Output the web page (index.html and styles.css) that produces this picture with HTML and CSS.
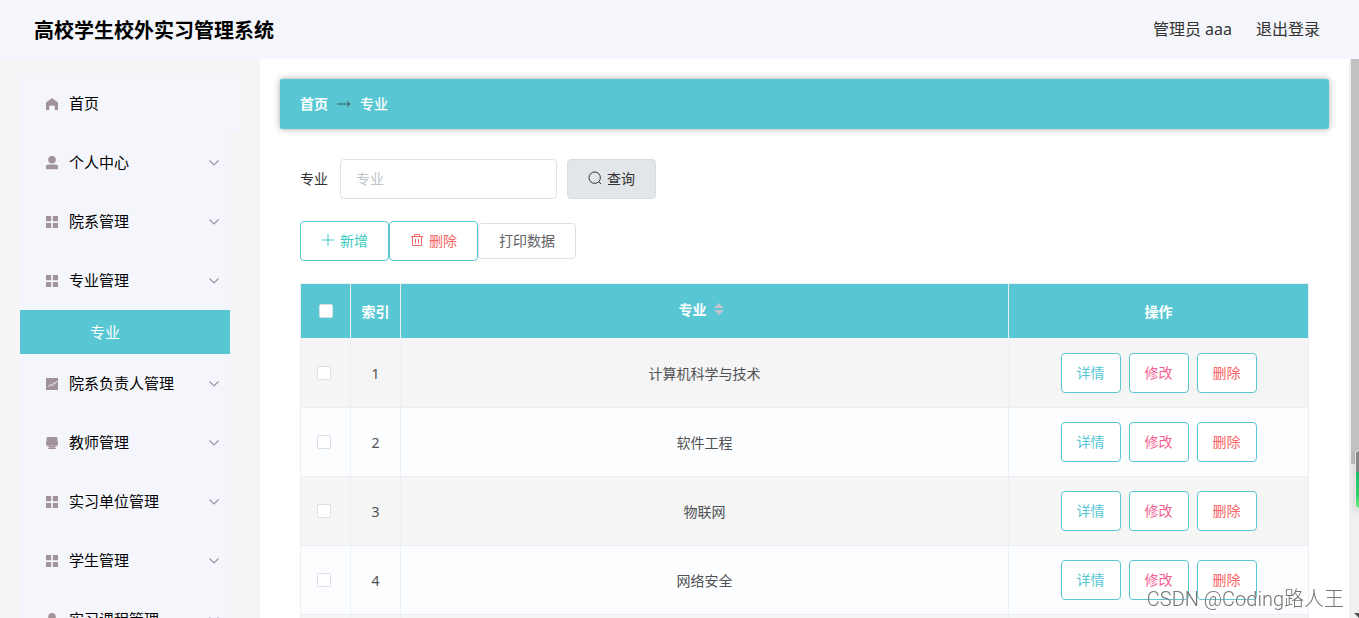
FILE: index.html
```html
<!DOCTYPE html>
<html lang="zh-CN">
<head>
<meta charset="utf-8">
<title>高校学生校外实习管理系统</title>
<link rel="stylesheet" href="styles.css">
</head>
<body>
<svg class="sprite" aria-hidden="true">
  <symbol id="i-home" viewBox="0 0 12 12"><path d="M6 0 12 4.4V12H8.8V8.4Q8.2 7.4 6 7.4T3.2 8.4V12H0V4.4Z"/></symbol>
  <symbol id="i-user" viewBox="0 0 12 14"><circle cx="6" cy="3.8" r="3.8"/><path d="M0 13.2V11Q0 8.6 2.6 8.6H9.4Q12 8.6 12 11V13.2Z"/></symbol>
  <symbol id="i-grid" viewBox="0 0 12 12"><path d="M0 0H5.2V5.2H0ZM6.9 0H12V5.2H6.9ZM0 6.9H5.2V12H0ZM6.9 6.9H12V12H6.9Z"/></symbol>
  <symbol id="i-chart" viewBox="0 0 12 12"><path d="M0 0H12V12H0Z"/><path d="M2 8.8 4.4 6.4 6.2 7.8 8 5H9.4L11 3" fill="none" stroke="#f4f6fb"/></symbol>
  <symbol id="i-printer" viewBox="0 0 12 12"><path d="M.8 0H11.2L12 6.6V8.4H0V6.6Z"/><path d="M1.6 8.4H10.4V9.8H8.8V10.4H3.2V9.8H1.6ZM2.2 10.8H9.8V12H2.2Z"/></symbol>
  <symbol id="i-down" viewBox="0 0 10 6"><path d="M.5 .5 5 5 9.5 .5" fill="none" stroke="currentColor" stroke-width="1.2"/></symbol>
</svg>

<header class="topbar">
  <h1 class="title">高校学生校外实习管理系统</h1>
  <div class="account">
    <span>管理员 aaa</span>
    <a class="logout" href="#">退出登录</a>
  </div>
</header>

<div class="layout">
  <nav class="sidebar">
    <ul class="menu">
      <li class="home"><a class="item" href="#"><svg class="icon"><use href="#i-home"/></svg><span class="label">首页</span></a></li>
      <li><a class="item" href="#"><svg class="icon tall"><use href="#i-user"/></svg><span class="label">个人中心</span><svg class="arrow"><use href="#i-down"/></svg></a></li>
      <li><a class="item" href="#"><svg class="icon"><use href="#i-grid"/></svg><span class="label">院系管理</span><svg class="arrow"><use href="#i-down"/></svg></a></li>
      <li><a class="item" href="#"><svg class="icon"><use href="#i-grid"/></svg><span class="label">专业管理</span><svg class="arrow"><use href="#i-down"/></svg></a>
        <a class="subitem" href="#">专业</a></li>
      <li><a class="item" href="#"><svg class="icon"><use href="#i-chart"/></svg><span class="label">院系负责人管理</span><svg class="arrow"><use href="#i-down"/></svg></a></li>
      <li><a class="item" href="#"><svg class="icon"><use href="#i-printer"/></svg><span class="label">教师管理</span><svg class="arrow"><use href="#i-down"/></svg></a></li>
      <li><a class="item" href="#"><svg class="icon"><use href="#i-grid"/></svg><span class="label">实习单位管理</span><svg class="arrow"><use href="#i-down"/></svg></a></li>
      <li><a class="item" href="#"><svg class="icon"><use href="#i-grid"/></svg><span class="label">学生管理</span><svg class="arrow"><use href="#i-down"/></svg></a></li>
      <li><a class="item" href="#"><svg class="icon tall"><use href="#i-user"/></svg><span class="label">实习课程管理</span><svg class="arrow"><use href="#i-down"/></svg></a></li>
    </ul>
  </nav>

  <main class="main">
    <div class="crumbs">
      <a class="crumb" href="#">首页</a>
      <svg class="crumb-arrow" viewBox="0 0 14 6"><path d="M0 3H13M10 .5 13 3 10 5.5" fill="none" stroke="currentColor"/></svg>
      <span class="crumb">专业</span>
    </div>

    <div class="content">
      <form class="search">
        <label class="search-label" for="major">专业</label>
        <input class="search-input" id="major" type="text" placeholder="专业">
        <button class="btn query" type="button"><svg class="btn-icon" viewBox="0 0 14 14"><circle cx="6.7" cy="6.7" r="5.7"/><path d="M10.6 10.6 13 13"/></svg>查询</button>
      </form>

      <div class="tools">
        <button class="btn add" type="button"><svg class="btn-icon" viewBox="0 0 14 14"><path d="M7 1V13M1 7H13"/></svg>新增</button>
        <button class="btn remove" type="button"><svg class="btn-icon" viewBox="0 0 14 14"><path d="M1 3.5H13M4.5 3.5V1.5H9.5V3.5M2.5 3.5V12.5H11.5V3.5M5.5 6V10.5M8.5 6V10.5"/></svg>删除</button>
        <button class="btn print" type="button">打印数据</button>
      </div>

      <table class="table">
        <colgroup><col class="c-check"><col class="c-index"><col><col class="c-ops"></colgroup>
        <thead>
          <tr>
            <th><input class="check" type="checkbox" aria-label="全选"></th>
            <th>索引</th>
            <th><span class="sortable">专业<svg class="sort" viewBox="0 0 10 12"><path d="M0 5 5 0 10 5ZM0 7H10L5 12Z"/></svg></span></th>
            <th>操作</th>
          </tr>
        </thead>
        <tbody>
          <tr><td class="pick"><input class="check" type="checkbox" aria-label="选择 1"></td><td>1</td><td>计算机科学与技术</td><td><div class="ops"><button class="op view" type="button">详情</button><button class="op edit" type="button">修改</button><button class="op del" type="button">删除</button></div></td></tr>
          <tr><td class="pick"><input class="check" type="checkbox" aria-label="选择 2"></td><td>2</td><td>软件工程</td><td><div class="ops"><button class="op view" type="button">详情</button><button class="op edit" type="button">修改</button><button class="op del" type="button">删除</button></div></td></tr>
          <tr><td class="pick"><input class="check" type="checkbox" aria-label="选择 3"></td><td>3</td><td>物联网</td><td><div class="ops"><button class="op view" type="button">详情</button><button class="op edit" type="button">修改</button><button class="op del" type="button">删除</button></div></td></tr>
          <tr><td class="pick"><input class="check" type="checkbox" aria-label="选择 4"></td><td>4</td><td>网络安全</td><td><div class="ops"><button class="op view" type="button">详情</button><button class="op edit" type="button">修改</button><button class="op del" type="button">删除</button></div></td></tr>
          <tr class="blank"><td></td><td></td><td></td><td></td></tr>
        </tbody>
      </table>
    </div>
  </main>

  <div class="scroll"><div class="thumb"></div><svg class="scroll-down" viewBox="0 0 5 5"><path d="M0 0H5V5Z"/></svg></div>
</div>

<div class="gauge"></div>
<div class="watermark">CSDN @Coding路人王</div>
</body>
</html>
```
FILE: styles.css
```css
* { box-sizing: border-box; }

body {
  margin: 0;
  height: 100vh;
  overflow: hidden;
  display: flex;
  flex-direction: column;
  font-family: "Noto Sans", "Noto Sans CJK SC", sans-serif;
  font-size: 14px;
  color: #333;
  background: #fff;
}

a { color: inherit; text-decoration: none; }
button, input { font: inherit; margin: 0; }
.sprite { position: absolute; width: 0; height: 0; }

.topbar {
  flex: none;
  height: 59px;
  padding: 0 39px 0 34px;
  display: flex;
  align-items: center;
  justify-content: space-between;
  background: #f4f6fb;
}
.title { margin: 0; padding-top: 2px; font-size: 20px; line-height: 28px; font-weight: 700; color: #000; }
.account { display: flex; gap: 24px; padding-bottom: 2px; font-size: 16px; line-height: 24px; }

.layout { flex: 1; min-height: 0; display: flex; }

.sidebar {
  flex: none;
  width: 260px;
  padding: 15px 20px 0;
  overflow: hidden;
  background: #f5f5f5;
}
.menu { margin: 0; padding: 0; list-style: none; }
.menu li { margin-right: 10px; background: #f4f6fb; }
.menu .home { margin-right: 0; }
.item {
  height: 59px;
  padding: 0 11px 0 26px;
  display: flex;
  align-items: center;
  font-size: 15px;
  color: #000;
}
.icon { flex: none; width: 12px; height: 12px; fill: #a2939b; }
.icon.tall { height: 14px; }
.label { flex: 1; margin-left: 11px; padding-bottom: 2px; }
.arrow { width: 10px; height: 6px; color: #9895a8; }
.subitem {
  height: 44px;
  padding: 0 0 2px 70px;
  display: flex;
  align-items: center;
  font-size: 15px;
  color: #fff;
  background: #58c7d3;
}

.main { flex: 1; min-width: 0; padding: 20px; overflow: hidden; }
.crumbs {
  height: 50px;
  padding: 0 20px;
  display: flex;
  align-items: center;
  gap: 9px;
  border-radius: 2px;
  color: #fff;
  font-weight: 700;
  background: #58c7d3;
  box-shadow: 0 0 6px rgba(0, 0, 0, .35);
}
.crumb { padding-bottom: 2px; }
span.crumb { font-weight: 500; }
.crumb-arrow { width: 14px; height: 6px; color: #44565e; }

.content { padding: 30px 20px 0; }
.search { display: flex; align-items: center; margin-bottom: 22px; }
.search-label { margin-right: 12px; padding-bottom: 2px; }
.search-input {
  width: 217px;
  height: 40px;
  padding: 0 15px 2px;
  border: 1px solid #dde3ea;
  border-radius: 4px;
  outline: 0;
}
.search-input::placeholder { color: #c0c4cc; }

.btn {
  height: 40px;
  padding: 0 20px 2px;
  display: flex;
  align-items: center;
  gap: 5px;
  border: 1px solid #58c7d3;
  border-radius: 4px;
  background: #fff;
}
.btn-icon { width: 14px; height: 14px; fill: none; stroke: currentColor; }
.query { margin-left: 10px; color: #333; border-color: #d9dde3; background: #e2e6e9; }
.add { color: #36cbbd; }
.remove { color: #f76464; }
.print { height: 36px; color: #606266; border-color: #dcdfe6; }
.tools { display: flex; align-items: center; margin-bottom: 22px; }

.table {
  width: 100%;
  table-layout: fixed;
  border-collapse: separate;
  border-spacing: 0;
  border-top: 1px solid #ebeef5;
  border-left: 1px solid #ebeef5;
  text-align: center;
}
.c-check, .c-index { width: 50px; }
.c-ops { width: 300px; }
.table th, .table td {
  padding: 0;
  border-right: 1px solid #ebeef5;
  border-bottom: 1px solid #ebeef5;
}
.table th { height: 55px; color: #fff; font-weight: 700; background: #58c7d3; border-bottom-color: #f2f4f6; }
.table td { height: 69px; color: #505154; background: #fbfdff; }
.table tr:nth-child(odd) td { background: #f5f5f5; }
.table .pick { padding-right: 4px; }
.sortable { display: inline-flex; align-items: center; gap: 7px; padding: 0 7px 4px 0; }
.sort { width: 10px; height: 12px; fill: #c0c4cc; }
.check {
  appearance: none;
  display: block;
  width: 14px;
  height: 14px;
  margin: 0 auto;
  border: 1px solid #dcdfe6;
  border-radius: 2px;
  background: #fff;
}
.ops { display: flex; justify-content: center; gap: 8px; }
.op {
  width: 60px;
  height: 40px;
  padding: 0 0 2px;
  border: 1px solid #58c7d3;
  border-radius: 4px;
  background: #fff;
}
.view { color: #58c7d3; }
.edit { color: #f75f93; }
.del { color: #f76464; }

.scroll {
  flex: none;
  width: 10px;
  padding-left: 2px;
  display: flex;
  flex-direction: column;
  justify-content: space-between;
  align-items: flex-end;
  background: #f0f0f0;
}
.thumb { width: 100%; height: 405px; background: #c1c1c1; }
.scroll-down { width: 5px; height: 5px; fill: #505050; }

.gauge {
  position: fixed;
  right: 0;
  top: 450px;
  width: 4px;
  height: 59px;
  border: 1px solid #e8e8e8;
  border-right: 0;
  border-radius: 4px 0 0 4px;
  background: linear-gradient(#868686 21px, #1fbf68 21px, #2fcf70 44px, #6fee78);
  box-shadow: 0 2px 6px rgba(0, 0, 0, .2);
}
.watermark {
  position: fixed;
  right: 15px;
  bottom: 5px;
  font-family: Roboto, "Noto Sans CJK SC", sans-serif;
  font-size: 20px;
  line-height: 28px;
  font-weight: 300;
  color: rgba(80, 80, 80, .8);
  text-shadow: 0 0 1px #fff;
}
```
